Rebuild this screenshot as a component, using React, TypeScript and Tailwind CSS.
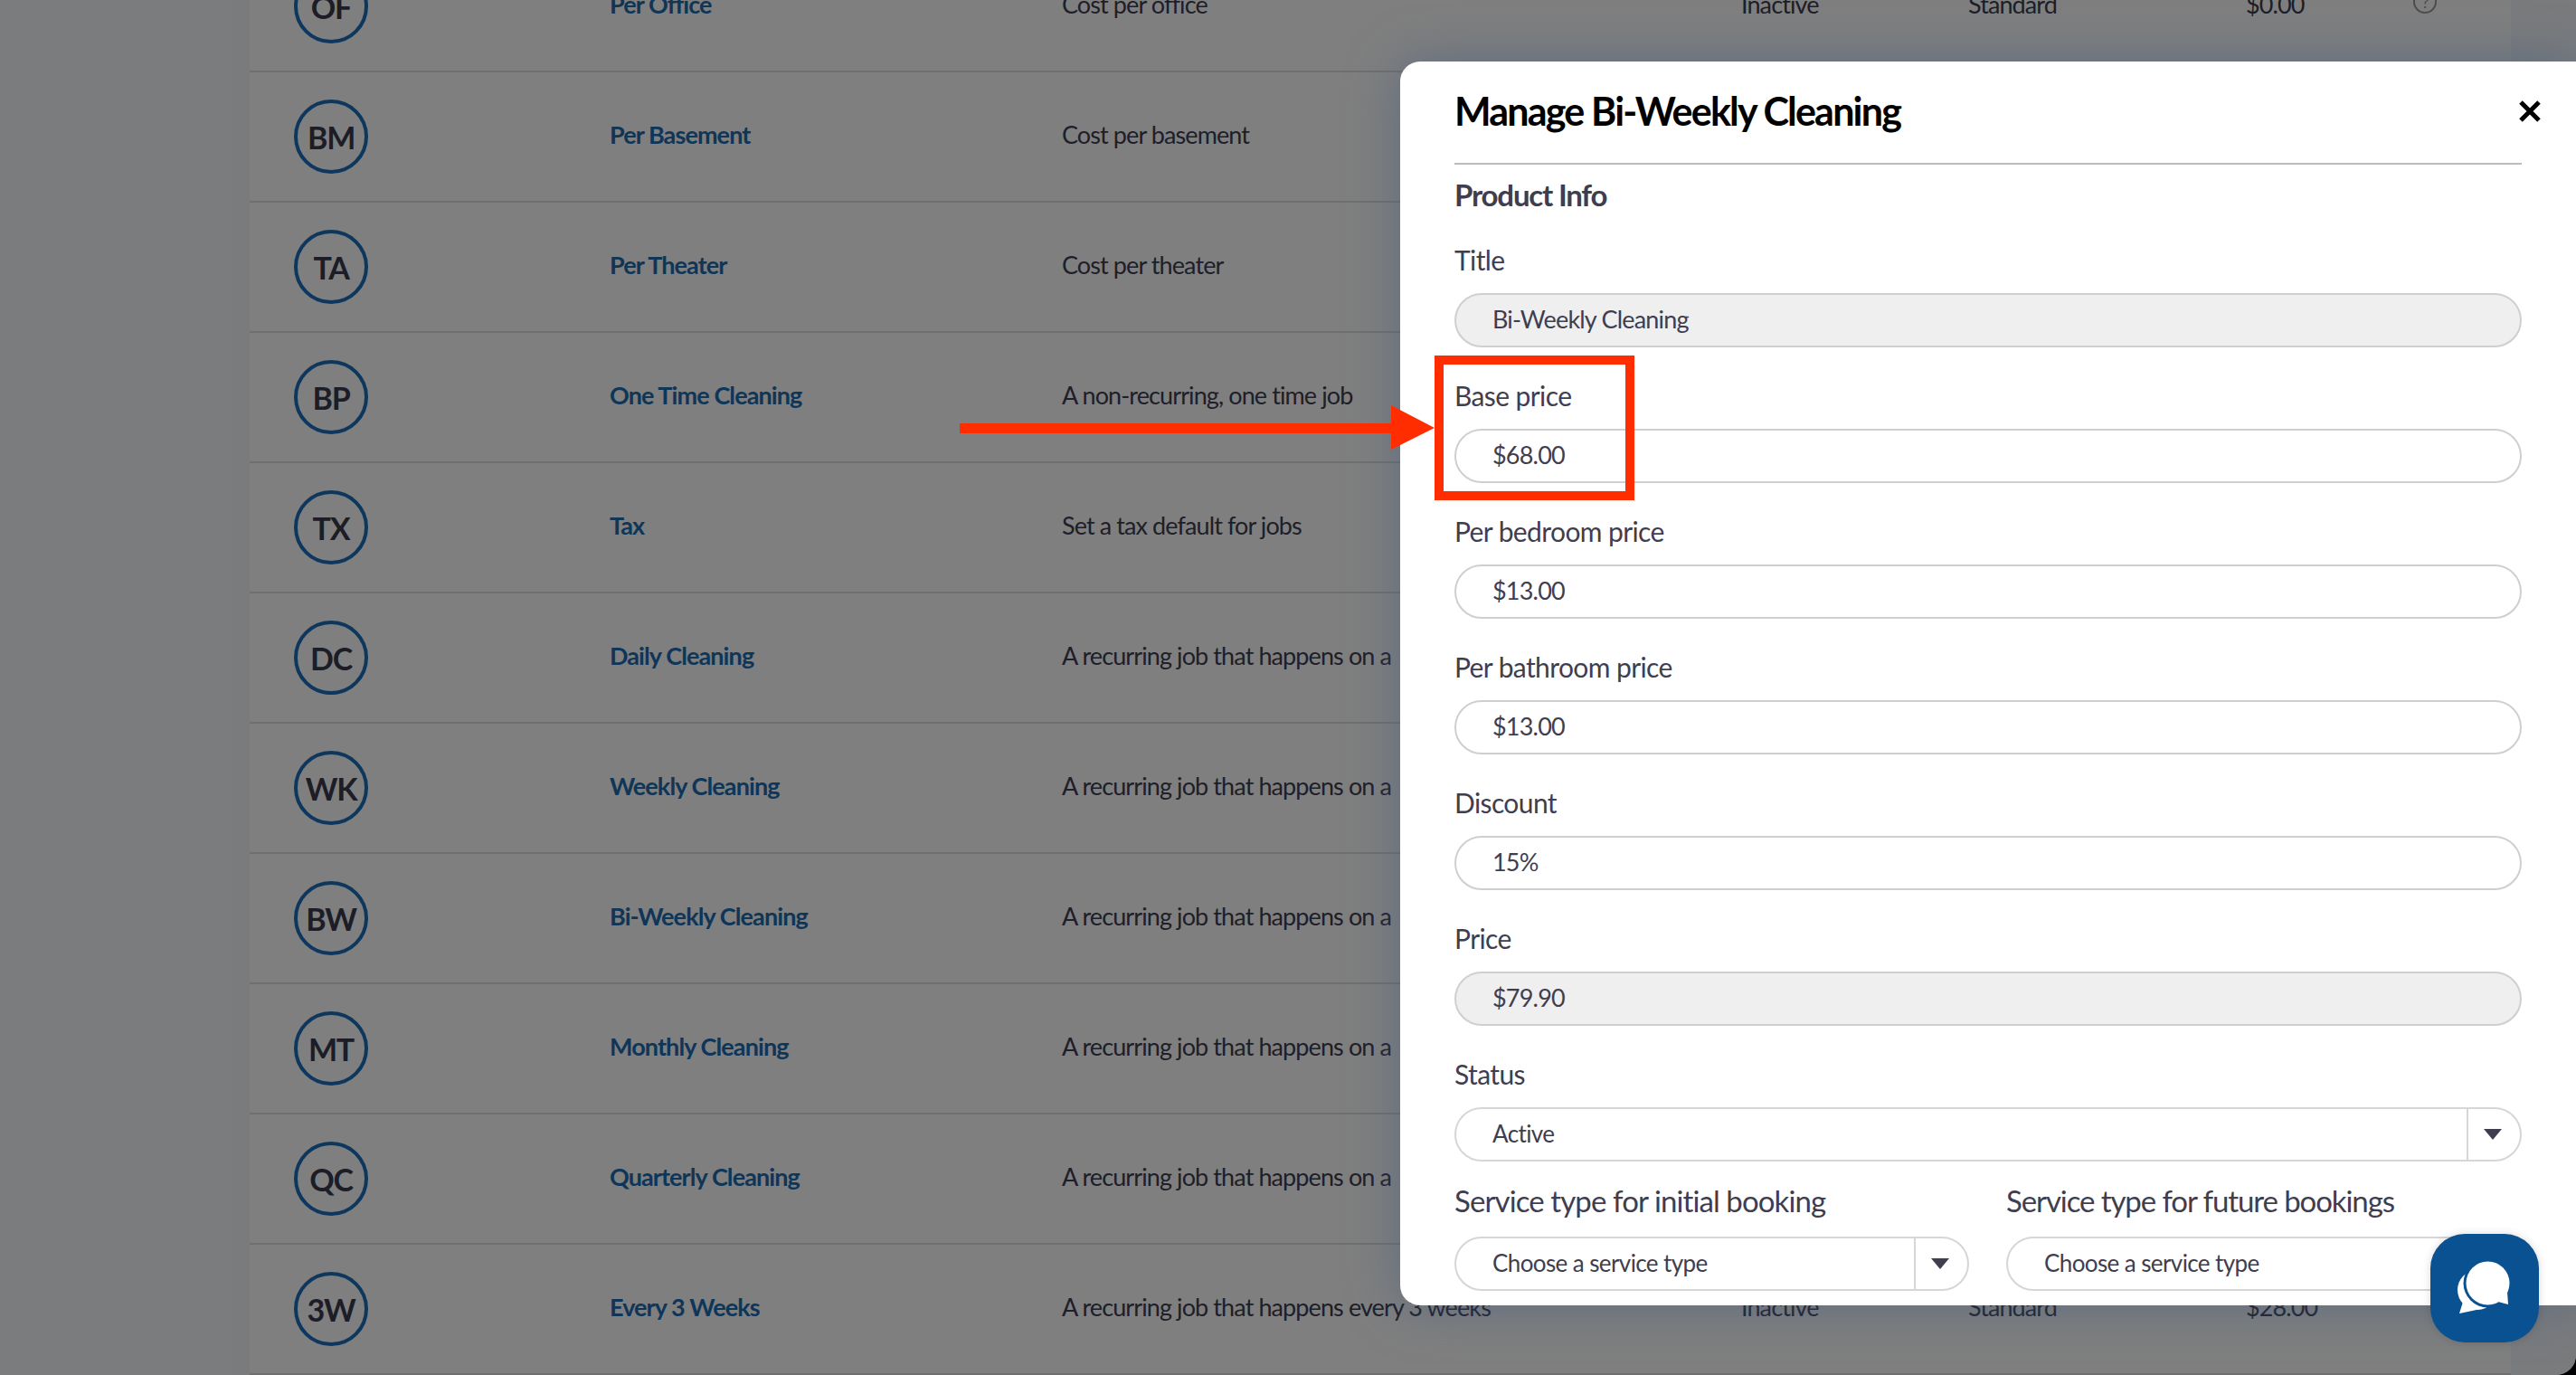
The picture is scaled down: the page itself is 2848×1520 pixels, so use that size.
import React from "react";

interface Row {
  code: string;
  name: string;
  desc: string;
  status?: string;
  type?: string;
  price?: string;
  help?: boolean;
}

// the modal hides the rest of this sentence in the screenshot
const RECURRING = "A recurring job that happens on a";

const rows: Row[] = [
  { code: "OF", name: "Per Office", desc: "Cost per office", status: "Inactive", type: "Standard", price: "$0.00", help: true },
  { code: "BM", name: "Per Basement", desc: "Cost per basement" },
  { code: "TA", name: "Per Theater", desc: "Cost per theater" },
  { code: "BP", name: "One Time Cleaning", desc: "A non-recurring, one time job" },
  { code: "TX", name: "Tax", desc: "Set a tax default for jobs" },
  { code: "DC", name: "Daily Cleaning", desc: RECURRING },
  { code: "WK", name: "Weekly Cleaning", desc: RECURRING },
  { code: "BW", name: "Bi-Weekly Cleaning", desc: RECURRING },
  { code: "MT", name: "Monthly Cleaning", desc: RECURRING },
  { code: "QC", name: "Quarterly Cleaning", desc: RECURRING },
  { code: "3W", name: "Every 3 Weeks", desc: "A recurring job that happens every 3 weeks", status: "Inactive", type: "Standard", price: "$28.00" },
];

const fields = [
  { label: "Title", value: "Bi-Weekly Cleaning", disabled: true },
  { label: "Base price", value: "$68.00" },
  { label: "Per bedroom price", value: "$13.00" },
  { label: "Per bathroom price", value: "$13.00" },
  { label: "Discount", value: "15%" },
  { label: "Price", value: "$79.90", disabled: true },
];

function ProductRow({ row }: { row: Row }) {
  return (
    <div className="grid h-[144px] grid-cols-[349px_500px_751px_251px_307px_185px_40px] items-center border-b-2 border-[#dfdfdf] pl-[49px] text-[27px] tracking-[-0.9px] text-[#3c3f52]">
      <div className="flex h-[82px] w-[82px] items-center justify-center rounded-full border-[4px] border-[#1b6fb8] text-[34px] font-bold tracking-[-1.2px] text-[#383a4c]">
        {row.code}
      </div>
      <div className="-mt-[3px] whitespace-nowrap font-bold text-[#1d6cb2]">{row.name}</div>
      <div className="-mt-[3px] whitespace-nowrap">{row.desc}</div>
      <div className="-mt-[3px]">{row.status}</div>
      <div className="-mt-[3px]">{row.type}</div>
      <div className="-mt-[3px]">{row.price}</div>
      <div className="-mt-[10px]">
        {row.help && (
          <div className="flex h-[26px] w-[26px] items-center justify-center rounded-full border-2 border-[#9a9a9a] text-[18px] text-[#9a9a9a]">
            ?
          </div>
        )}
      </div>
    </div>
  );
}

function Field({ label, value, disabled }: { label: string; value: string; disabled?: boolean }) {
  return (
    <div>
      <div className="mb-[15px] text-[30px] leading-[44px] tracking-[-0.6px]">{label}</div>
      <div
        className={`flex h-[60px] items-center rounded-full border-2 border-[#cfcfcf] pb-[2px] pl-[40px] text-[27px] tracking-[-0.8px] ${
          disabled ? "bg-[#efefef]" : "bg-white"
        }`}
      >
        {value}
      </div>
    </div>
  );
}

function SelectBox({ value }: { value: string }) {
  return (
    <div className="flex h-[60px] items-center rounded-full border-2 border-[#d6d6d6] bg-white text-[26px] tracking-[-0.6px]">
      <div className="flex-1 pb-[2px] pl-[40px]">{value}</div>
      <div className="flex h-full w-[59px] items-center justify-center border-l-2 border-[#d6d6d6] pr-[4px]">
        <svg width="20" height="12" viewBox="0 0 20 12">
          <path d="M0 0h20L10 12z" fill="#3f3e4e" />
        </svg>
      </div>
    </div>
  );
}

function Modal() {
  return (
    <div className="absolute left-[1548px] top-[68px] h-[1375px] w-[1300px] overflow-hidden rounded-l-[22px] bg-white pl-[60px] pr-[60px] pt-[25px] text-[#3f3e4e] shadow-[0_0_55px_rgba(70,95,130,0.55)]">
      <div className="mb-[27px] flex h-[60px] items-center justify-between">
        <div className="text-[43px] font-bold tracking-[-1.8px] text-black">Manage Bi-Weekly Cleaning</div>
        <svg className="-mr-[22px]" width="26" height="24" viewBox="0 0 26 24">
          <path d="M3 2l20 20M23 2L3 22" stroke="#000" strokeWidth="5" />
        </svg>
      </div>
      <div className="mb-[11px] h-[2px] bg-[#bcbcbc]" />
      <div className="mb-[28px] text-[33px] font-bold leading-[44px] tracking-[-1.2px]">Product Info</div>
      <div className="flex flex-col gap-[31px]">
        {fields.map((f) => (
          <Field key={f.label} {...f} />
        ))}
        <div>
          <div className="mb-[15px] text-[30px] leading-[44px] tracking-[-0.6px]">Status</div>
          <SelectBox value="Active" />
        </div>
      </div>
      <div className="mt-[21px] grid grid-cols-[569px_569px] gap-x-[41px]">
        <div>
          <div className="mb-[18px] whitespace-nowrap text-[33px] leading-[44px] tracking-[-0.9px]">
            Service type for initial booking
          </div>
          <SelectBox value="Choose a service type" />
        </div>
        <div>
          <div className="mb-[18px] whitespace-nowrap text-[33px] leading-[44px] tracking-[-1.1px]">
            Service type for future bookings
          </div>
          <SelectBox value="Choose a service type" />
        </div>
      </div>
    </div>
  );
}

function ChatButton() {
  return (
    <div className="absolute bottom-[36px] right-[41px] h-[120px] w-[120px] rounded-[38px] bg-[#0a5192] shadow-[0_0_10px_rgba(0,0,0,0.15)]">
      <svg width="120" height="120" viewBox="0 0 120 120">
        <circle cx="52" cy="62" r="22" fill="#fff" />
        <path d="M32 88l5-16 14 12z" fill="#fff" />
        <circle cx="63.5" cy="54.5" r="27" fill="#0a5192" />
        <circle cx="63.5" cy="54.5" r="24" fill="#fff" />
        <path d="M86 78L71 74l14-10z" fill="#fff" />
      </svg>
    </div>
  );
}

function Annotation() {
  return (
    <>
      <div className="absolute left-[1586px] top-[393px] h-[160px] w-[221px] border-[10px] border-[#ff2d00]" />
      <svg className="absolute left-[1061px] top-[448px]" width="525" height="50" viewBox="0 0 525 50">
        <path d="M0 20h477V0l48 25-48 24V31H0z" fill="#ff2d00" />
      </svg>
    </>
  );
}

export default function App() {
  return (
    <div className="relative h-[1520px] w-[2848px] overflow-hidden bg-black font-['Lato','Liberation_Sans',sans-serif]">
      <div className="h-full overflow-hidden rounded-br-[22px] bg-[#f5f7fa]">
        <div className="ml-[276px] mr-[72px] -mt-[64px] h-[1582px] border-b-2 border-[#ffffff] bg-white">
          {rows.map((r) => (
            <ProductRow key={r.code} row={r} />
          ))}
        </div>
      </div>
      <div className="absolute inset-0 rounded-br-[22px] bg-black/50" />
      <Modal />
      <Annotation />
      <ChatButton />
    </div>
  );
}
